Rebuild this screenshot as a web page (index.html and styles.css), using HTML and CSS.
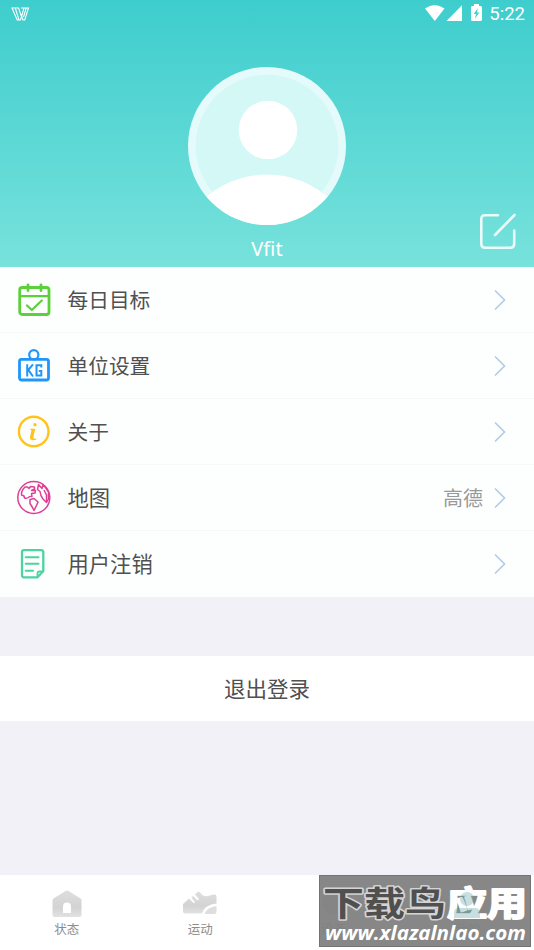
FILE: index.html
```html
<!DOCTYPE html>
<html lang="zh-CN">
<head>
<meta charset="utf-8">
<title>Vfit</title>
<link rel="stylesheet" href="styles.css">
</head>
<body>
<div class="screen">
  <header class="hero">
    <div class="status">
      <svg class="brand" width="20" height="15" viewBox="0 0 20 15" fill="none" stroke="#fff" stroke-width="1.1">
        <path d="M1 1H4.300L8 13H6.200ZM4.300 1H7.600L10.200 9M10 1H13L9.500 13H8M13 1H17.500L13.700 13H12L9.800 7M15.200 1L12.500 10"/>
      </svg>
      <div class="signals">
        <svg width="60" height="18" viewBox="0 0 60 18" fill="#fff">
          <path d="M0 4.500Q9.500-2.500 19.500 4.500L9.800 17Z"/>
          <path d="M37 1.200V17H21.500Z"/>
          <path d="M47 2H49V0H54V2H55.500Q57 2 57 3.500V15.500Q57 17 55.500 17H47.500Q46 17 46 15.500V3.500Q46 2 47 2Z"/>
          <path fill="#46cfce" d="M52.800 4L48.800 10H51L50 14.800L54.300 8.500H52Z"/>
        </svg>
        <span class="clock">5:22</span>
      </div>
    </div>
    <svg class="avatar" width="160" height="160" viewBox="0 0 160 160">
      <defs><clipPath id="disc"><circle cx="80" cy="80" r="79"/></clipPath></defs>
      <circle cx="80" cy="80" r="79" fill="#e5fafa"/>
      <circle cx="80" cy="80" r="71.300" fill="#d3f8f6"/>
      <circle cx="81" cy="64" r="29.300" fill="#fff"/>
      <circle cx="80" cy="202" r="93.500" fill="#fff" clip-path="url(#disc)"/>
    </svg>
    <div class="name">Vfit</div>
    <svg class="edit" width="40" height="40" viewBox="0 0 40 40" fill="none" stroke="#e9fbfa" stroke-width="2.600" stroke-linecap="round">
      <path d="M20 4.300H7Q3.300 4.300 3.300 8V33Q3.300 36.700 7 36.700H32.500Q36.200 36.700 36.200 33V19.500M17 24L36.500 4"/>
    </svg>
  </header>

  <main>
    <div class="list">
      <div class="row">
        <svg class="icon" width="36" height="36" viewBox="0 0 36 36" fill="none" stroke="#5bd03a" stroke-width="2.800" stroke-linecap="round" stroke-linejoin="round">
          <rect x="3.700" y="5.500" width="29.300" height="27" rx="2.500"/><path d="M4 14.200H33" stroke-width="2.300"/><path d="M12 2.800V8.500M25 2.800V8.500"/><path d="M11 23.500L15.800 28L25.800 18.500" stroke-width="2.200"/>
        </svg>
        <span class="label">每日目标</span>
        <svg class="arrow" width="14" height="22" viewBox="0 0 14 22"><path d="M2 1.500L11.500 11L2 20.500"/></svg>
      </div>
      <div class="row">
        <svg class="icon" width="36" height="36" viewBox="0 0 36 36" fill="none" stroke="#2196fa" stroke-width="2.800" stroke-linejoin="round">
          <circle cx="17.800" cy="6.700" r="4.600" stroke-width="2.200"/><rect x="3.500" y="11.300" width="29" height="20.700" rx="2"/><path stroke-width="2" stroke-linejoin="miter" d="M11.200 16.300V28.500M17 16.300L12.300 21.900L17 28.500M25.300 19.500V17.300H20.500V27.500H25.300V23H22.800"/>
        </svg>
        <span class="label">单位设置</span>
        <svg class="arrow" width="14" height="22" viewBox="0 0 14 22"><path d="M2 1.500L11.500 11L2 20.500"/></svg>
      </div>
      <div class="row">
        <svg class="icon" width="36" height="36" viewBox="0 0 36 36" fill="none" stroke="#ffc41c" stroke-width="2.400">
          <circle cx="17.700" cy="17.500" r="14.800"/><circle cx="19" cy="10.800" r="1.700" fill="#ffc41c" stroke="none"/><path d="M14.500 14.800H19.300L17.300 23Q16.800 25.400 20.500 24.500L20.200 25.800Q13.200 27.200 14 23L15.500 16.300L14.200 15.800Z" fill="#ffc41c" stroke="none"/>
        </svg>
        <span class="label">关于</span>
        <svg class="arrow" width="14" height="22" viewBox="0 0 14 22"><path d="M2 1.500L11.500 11L2 20.500"/></svg>
      </div>
      <div class="row">
        <svg class="icon" width="36" height="36" viewBox="0 0 36 36" fill="none" stroke="#de3f96" stroke-width="1.500" stroke-linejoin="round">
          <circle cx="17.800" cy="17.500" r="16"/>
          <path d="M9 7Q5 11 5.500 15L8 16L8.500 18Q11 18.500 12.500 17.500Q13 16 16 16.500L15.500 13.500L19 13L19.500 10.500L15.500 10.500L18.500 9V7L14.500 6.500L13 8.500L11.500 7Z"/>
          <path d="M22.500 4.500L21.500 9.500L24 11.500Q24.500 16 27 19L30.500 22.500L32.500 19V12L29.500 7.500L27 5L26 8.500Z"/>
          <path d="M28 10L30.500 15V21"/>
          <path d="M14 19.500L18 18.500L22 22L20.500 25.500L18 30.500L16.500 27.500L14 23.500Z"/>
        </svg>
        <span class="label wide">地图</span>
        <span class="value">高德</span>
        <svg class="arrow" width="14" height="22" viewBox="0 0 14 22"><path d="M2 1.500L11.500 11L2 20.500"/></svg>
      </div>
      <div class="row">
        <svg class="icon" width="36" height="36" viewBox="0 0 36 36" fill="none" stroke="#4bd3a0" stroke-width="2.300" stroke-linecap="round" stroke-linejoin="round">
          <path d="M8 4.200H25Q27.300 4.200 27.300 6.200V25L21.500 31.300H8Q6 31.300 6 29.300V6.200Q6 4.200 8 4.200Z"/><path d="M21.500 31V27.500Q21.500 25.500 23.500 25.500H27" stroke-width="1.800"/><path d="M9.700 11.300H22.500M9.700 17.700H22.500M9.700 24.700H17" stroke-width="2"/>
        </svg>
        <span class="label wide">用户注销</span>
        <svg class="arrow" width="14" height="22" viewBox="0 0 14 22"><path d="M2 1.500L11.500 11L2 20.500"/></svg>
      </div>
    </div>
    <div class="logout">退出登录</div>
  </main>

  <nav class="tabs">
    <div class="tab">
      <svg width="36" height="30" viewBox="0 0 36 30">
        <defs><linearGradient id="grey" x1="0" y1="0" x2="0" y2="1"><stop stop-color="#dedede"/><stop offset=".65" stop-color="#d3d3d3"/><stop offset="1" stop-color="#e1e1e1"/></linearGradient></defs>
        <path fill="url(#grey)" fill-rule="evenodd" d="M16.500 2Q18 1 19.500 2L31.500 9.500Q32.500 10.200 32.500 11.500V26Q32.500 28 30.500 28H5.500Q3.500 28 3.500 26V11.500Q3.500 10.200 4.500 9.500ZM14 24H22V17.500Q22 13.500 18 13.500Q14 13.500 14 17.500Z"/>
      </svg>
      <span>状态</span>
    </div>
    <div class="tab">
      <svg width="36" height="30" viewBox="0 0 36 30">
        <path fill="url(#grey)" d="M1 15L7 9.500L11 13.500Q12.500 14.500 13 13L9.500 8.500L11 7L15 11Q16.500 11.500 17 10L13 5.500L15 3.500Q17 2 18.500 4Q22 9 28 6.500Q34 4.500 34.500 7V14.500Q23 15.500 20 24.500H3Q1 24.500 1 22.500Z"/>
        <path fill="#dedede" d="M22.500 25Q25 18 34.500 17V23Q34.500 25 32 25Z"/>
      </svg>
      <span>运动</span>
    </div>
    <div class="tab">
      <svg width="36" height="30" viewBox="0 0 36 30"><circle cx="18" cy="14" r="12" fill="url(#grey)"/></svg>
      <span>设备</span>
    </div>
    <div class="tab active">
      <svg width="36" height="30" viewBox="0 0 36 30" fill="#46cfce"><circle cx="18" cy="9" r="7"/><path d="M5 28V23Q5 18 10 18H26Q31 18 31 23V28Z"/></svg>
      <span>我的</span>
    </div>
  </nav>

  <div class="watermark">
    <svg width="212" height="72" viewBox="0 0 212 72">
      <g class="mark-title">
        <text class="dark" x="4" y="41" textLength="123" lengthAdjust="spacingAndGlyphs">下载鸟</text>
        <text class="light" x="128" y="41" textLength="80" lengthAdjust="spacingAndGlyphs">应用</text>
      </g>
      <g fill="#75b0ae" opacity=".4"><circle cx="148" cy="24" r="7"/><path d="M135 43V38Q135 33 140 33H156Q161 33 161 38V43Z"/></g>
      <text class="mark-url" x="6" y="64.500" textLength="201" lengthAdjust="spacingAndGlyphs">www.xlazalnlao.com</text>
    </svg>
  </div>
</div>
</body>
</html>
```
FILE: styles.css
```css
* { box-sizing: border-box; }
body {
  margin: 0;
  font-family: Roboto, "Noto Sans CJK SC", sans-serif;
  color: #505050;
}
.screen {
  position: relative;
  display: flex;
  flex-direction: column;
  width: 534px;
  height: 950px;
  overflow: hidden;
  background: #f2f1f8;
}
.hero {
  position: relative;
  display: flex;
  flex-direction: column;
  align-items: center;
  height: 267px;
  background: linear-gradient(#3ecdcd, #78e2dc);
}
.status {
  display: flex;
  justify-content: space-between;
  width: 100%;
  height: 66px;
  padding: 4px 9px 0 11px;
}
.brand { margin-top: 3px; }
.signals { display: flex; align-items: flex-start; gap: 5px; }
.signals svg { margin-right: -1px; }
.clock {
  font-size: 18.500px;
  line-height: 20px;
  color: #fff;
}
.avatar { display: block; }
.name {
  margin-top: 9px;
  font-family: "Noto Sans", sans-serif;
  font-size: 20px;
  line-height: 27px;
  color: #fff;
}
.edit { position: absolute; right: 16px; bottom: 16px; }
.row {
  display: flex;
  align-items: center;
  height: 66px;
  padding: 0 27px 0 16px;
  background: #fdfffe;
  border-bottom: 1px solid #f5f8f9;
}
.row:last-child { border-bottom: 0; }
.icon { flex: none; }
.label {
  flex: 1;
  margin-left: 15.500px;
  padding-top: 2px;
  font-size: 20.700px;
  line-height: 30px;
}
.label.wide { font-size: 21.300px; }
.value { margin-right: 10px; font-size: 20px; color: #999; }
.arrow {
  fill: none;
  stroke: #b3cde6;
  stroke-width: 1.700;
}
.logout {
  display: flex;
  align-items: center;
  justify-content: center;
  height: 65px;
  margin-top: 59px;
  padding-bottom: 3px;
  background: #fff;
  font-size: 21.500px;
}
.tabs {
  display: flex;
  height: 75px;
  margin-top: auto;
  padding-top: 14px;
  background: #fff;
}
.tab {
  flex: 1;
  display: flex;
  flex-direction: column;
  align-items: center;
  font-size: 12.500px;
  line-height: 18px;
  color: #8c8c8c;
}
.tab span { margin-top: 2px; }
.tab.active { color: #46cfce; }
.watermark {
  position: absolute;
  left: 319px;
  top: 875px;
  width: 212px;
  height: 72px;
  background: rgb(128 128 128 / .94);
  border: 1px solid #737373;
}
.watermark svg { display: block; margin: -1px; }
.mark-title {
  font-family: "Noto Sans CJK SC", sans-serif;
  font-size: 34px;
  font-weight: 700;
  paint-order: stroke;
  stroke-linejoin: round;
}
.dark { fill: #505050; stroke: #d4d4d4; stroke-width: 3px; }
.light { fill: #fff; stroke: #fff; stroke-width: 2px; }
.mark-url {
  font-family: "Open Sans", sans-serif;
  font-size: 20px;
  font-weight: 700;
  font-style: italic;
  fill: #fff;
}
```
